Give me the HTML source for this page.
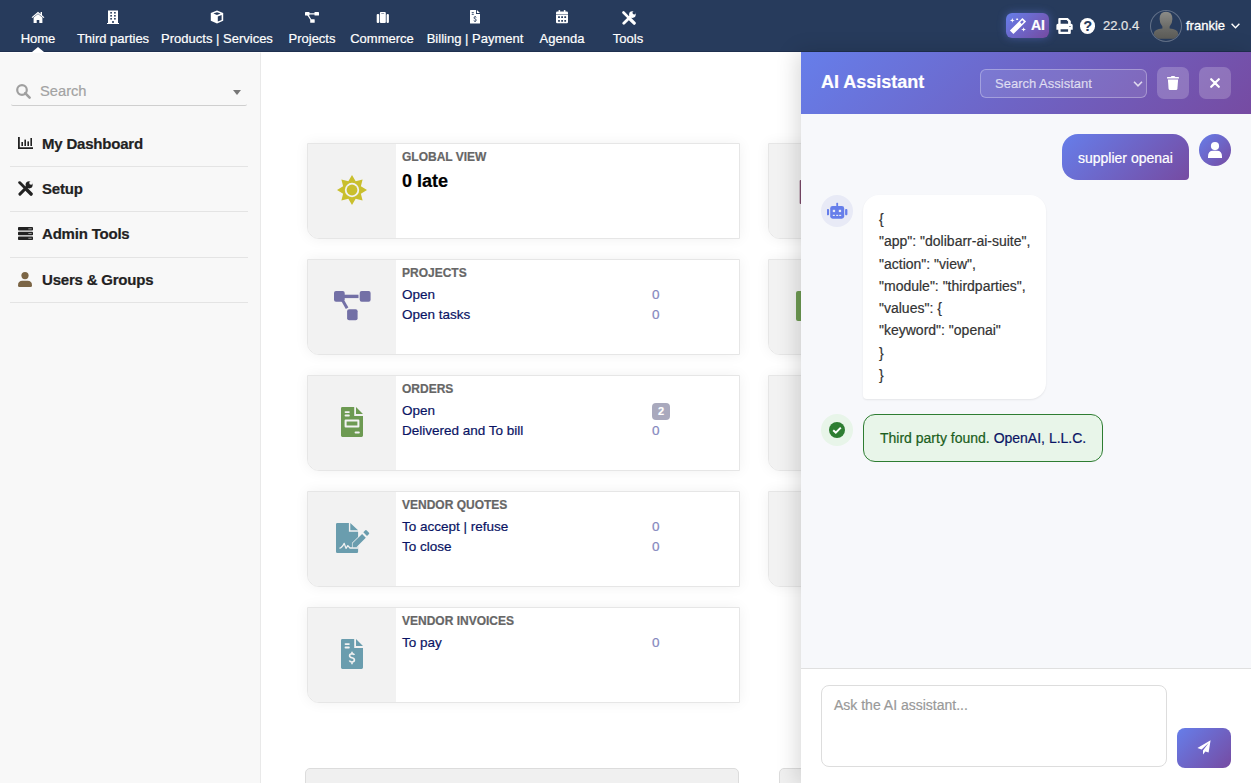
<!DOCTYPE html>
<html><head><meta charset="utf-8">
<style>
*{box-sizing:border-box;margin:0;padding:0}
html,body{width:1251px;height:783px;overflow:hidden;background:#fff;font-family:"Liberation Sans",sans-serif;position:relative}
.abs{position:absolute}
#top{position:absolute;left:0;top:0;width:1251px;height:52px;background:rgb(39,59,92);border-bottom:1px solid rgb(31,48,79)}
.mi{position:absolute;top:0;height:52px;color:#fff;font-size:13px;text-align:center}
.mi .lbl{position:absolute;top:31px;left:0;white-space:nowrap;line-height:15px}
.mi svg{position:absolute;top:10px}
#side{position:absolute;left:0;top:52px;width:261px;height:731px;background:#f8f8f8;border-right:1px solid #e9e9e9;border-top:1px solid #fff}
.sm{position:absolute;left:42px;font-size:15px;letter-spacing:-0.2px;font-weight:bold;color:#222;white-space:nowrap;line-height:17px}
.sep{position:absolute;left:10px;width:238px;height:1px;background:#e4e4e4}
.box{position:absolute;left:307px;width:433px;height:96px;background:#fff;border:1px solid #e6e6e6;border-radius:0 0 0 12px;box-shadow:0 0 14px rgba(0,0,0,0.06)}
.box .ic{position:absolute;left:0;top:0;width:88px;height:94px;background:#f2f2f2;border-radius:0 0 0 11px}
.box .ttl{position:absolute;left:94px;top:6px;font-size:12px;font-weight:bold;color:#666;line-height:14px;white-space:nowrap}
.box .row{position:absolute;left:94px;font-size:13.5px;color:rgb(10,20,100);line-height:16px;white-space:nowrap}
.box .num{position:absolute;left:344px;font-size:13.5px;color:#8587be;line-height:16px}
.boxr{left:768px}
#panel{position:absolute;left:801px;top:52px;width:450px;height:731px;background:#f7f8fb;box-shadow:-4px 0 20px rgba(0,0,0,0.15)}
#phead{position:absolute;left:0;top:0;width:450px;height:62px;background:linear-gradient(135deg,#667eea 0%,#764ba2 100%)}
body *{-webkit-text-stroke:0.2px currentColor}
</style></head><body>
<div id="top">
  <!-- Home -->
  <svg class="abs" style="left:31px;top:11px" width="14" height="12" viewBox="0 0 14 12"><path d="M7 0.8 L0.6 6.2 L1.4 7.1 L7 2.4 L12.6 7.1 L13.4 6.2 L11 4.2 V1 H9.6 V3 Z" fill="#fff"/><path d="M2.6 6.6 L7 3 L11.4 6.6 V12 H8.3 V9 H5.7 V12 H2.6Z" fill="#fff"/></svg>
  <div class="mi" style="left:-62px;width:200px"><span class="lbl" style="width:200px">Home</span></div>
  <!-- Third parties -->
  <svg class="abs" style="left:107px;top:10px" width="12" height="14" viewBox="0 0 12 14"><path d="M1 0.5 H11 V13 H12 V14 H0 V13 H1Z" fill="#fff"/><g fill="rgb(39,59,92)"><rect x="3.3" y="2" width="1.6" height="1.6"/><rect x="7.1" y="2" width="1.6" height="1.6"/><rect x="3.3" y="5" width="1.6" height="1.6"/><rect x="7.1" y="5" width="1.6" height="1.6"/><rect x="3.3" y="8" width="1.6" height="1.6"/><rect x="7.1" y="8" width="1.6" height="1.6"/><rect x="5.2" y="11" width="1.6" height="2"/></g></svg>
  <div class="mi" style="left:13px;width:200px"><span class="lbl" style="width:200px">Third parties</span></div>
  <!-- Products -->
  <svg class="abs" style="left:210px;top:10px" width="14" height="14" viewBox="0 0 14 14"><path d="M7 0.5 L13.2 3 V10.8 L7 13.5 L0.8 10.8 V3Z" fill="#fff"/><path d="M7 2.2 L10.6 3.6 L7 5 L3.4 3.6Z M7.8 6.4 L11.6 4.9 V10 L7.8 11.6Z" fill="rgb(39,59,92)"/></svg>
  <div class="mi" style="left:117px;width:200px"><span class="lbl" style="width:200px">Products | Services</span></div>
  <!-- Projects -->
  <svg class="abs" style="left:305px;top:12px" width="14" height="11" viewBox="0 0 14 11"><rect x="0" y="0" width="4.5" height="3.6" rx="0.6" fill="#fff"/><rect x="9.5" y="0" width="4.5" height="3.6" rx="0.6" fill="#fff"/><rect x="5.2" y="7.2" width="4.5" height="3.6" rx="0.6" fill="#fff"/><path d="M4 1.2 H10 V2.4 H4Z M2.2 3 L3.4 2.6 L6.4 7.4 L5.2 7.8Z" fill="#fff"/></svg>
  <div class="mi" style="left:212px;width:200px"><span class="lbl" style="width:200px">Projects</span></div>
  <!-- Commerce -->
  <svg class="abs" style="left:376px;top:11px" width="13" height="12" viewBox="0 0 13 12"><rect x="0.7" y="3.1" width="2.5" height="8.8" rx="1" fill="#fff"/><rect x="3.9" y="0.9" width="5.9" height="11" rx="1" fill="#fff"/><rect x="5.2" y="2.2" width="3" height="0.8" rx="0.3" fill="rgb(120,130,150)"/><rect x="10.6" y="3.1" width="2.3" height="8.8" rx="1" fill="#fff"/></svg>
  <div class="mi" style="left:282px;width:200px"><span class="lbl" style="width:200px">Commerce</span></div>
  <!-- Billing -->
  <svg class="abs" style="left:470px;top:10.2px" width="10" height="14" viewBox="0 0 10 14"><path d="M0 0.6 Q0 0 0.6 0 H6 V3.9 H10 V12.9 Q10 13.5 9.4 13.5 H0.6 Q0 13.5 0 12.9Z M6.9 0 L10 3.1 H6.9Z" fill="#fff"/><g fill="rgb(39,59,92)"><rect x="1.6" y="1.9" width="2.3" height="0.9" rx="0.4"/><rect x="1.6" y="3.8" width="2.3" height="0.9" rx="0.4"/></g><path d="M6.3 7.4 Q5.9 6.9 5.1 6.9 Q4 7 4 7.9 Q4 8.6 5.1 8.9 Q6.3 9.2 6.3 10.1 Q6.3 11 5.1 11.1 Q4.1 11.1 3.7 10.5 M5.1 6 V6.9 M5.1 11.1 V12" stroke="rgb(39,59,92)" stroke-width="0.9" fill="none"/></svg>
  <div class="mi" style="left:375px;width:200px"><span class="lbl" style="width:200px">Billing | Payment</span></div>
  <!-- Agenda -->
  <svg class="abs" style="left:556px;top:10.3px" width="12" height="14" viewBox="0 0 12 14"><rect x="2.6" y="0" width="1.5" height="2.8" rx="0.6" fill="#fff"/><rect x="7.9" y="0" width="1.5" height="2.8" rx="0.6" fill="#fff"/><path d="M0 3 Q0 1.6 1.3 1.6 H10.7 Q12 1.6 12 3 V4.4 H0Z" fill="#fff"/><path d="M0 5 H12 V12.1 Q12 13.3 10.8 13.3 H1.2 Q0 13.3 0 12.1Z" fill="#fff"/><g fill="rgb(39,59,92)"><rect x="2.1" y="6.3" width="1.8" height="1.8" rx="0.3"/><rect x="5.2" y="6.3" width="1.8" height="1.8" rx="0.3"/><rect x="8.3" y="6.3" width="1.8" height="1.8" rx="0.3"/><rect x="2.1" y="9.9" width="1.8" height="1.8" rx="0.3"/><rect x="5.2" y="9.9" width="1.8" height="1.8" rx="0.3"/><rect x="8.3" y="9.9" width="1.8" height="1.8" rx="0.3"/></g></svg>
  <div class="mi" style="left:462px;width:200px"><span class="lbl" style="width:200px">Agenda</span></div>
  <!-- Tools -->
  <svg class="abs" style="left:621.9px;top:10.7px" width="14" height="14" viewBox="0 0 14 14"><path d="M1.5 1.5 L6.6 6.6" stroke="#fff" stroke-width="2.6" stroke-linecap="round"/><path d="M8 8 L12.2 12.2" stroke="#fff" stroke-width="3.2" stroke-linecap="round"/><path d="M1.8 12.2 L8.6 5.4" stroke="#fff" stroke-width="2.8" stroke-linecap="round"/><circle cx="10.4" cy="3.6" r="3.3" fill="#fff"/><circle cx="12.2" cy="1.8" r="1.7" fill="rgb(39,59,92)"/></svg>
  <div class="mi" style="left:528px;width:200px"><span class="lbl" style="width:200px">Tools</span></div>
  <!-- active triangle -->
  <div class="abs" style="left:32px;top:46.5px;width:0;height:0;border-left:6px solid transparent;border-right:6px solid transparent;border-bottom:5.5px solid #fff"></div>

  <!-- AI button -->
  <div class="abs" style="left:1006px;top:13px;width:43px;height:25px;border-radius:6px;background:linear-gradient(135deg,#667eea 0%,#764ba2 100%);box-shadow:0 0 8px rgba(102,126,234,0.45)"></div>
  <svg class="abs" style="left:1004px;top:11px" width="48" height="29" viewBox="0 0 48 29"><path d="M18.4 7.1 L22.1 10.6 L9.4 23 L5.9 19.4Z M18.26 9.26 L19.8 10.84 L17.66 12.94 L16.12 11.36Z" fill="#fff" fill-rule="evenodd"/><path d="M8.3 7 Q8.3 9.4 10.7 9.4 Q8.3 9.4 8.3 11.8 Q8.3 9.4 5.9 9.4 Q8.3 9.4 8.3 7Z" fill="#fff"/><rect x="12.1" y="7.6" width="2.1" height="1.3" rx="0.6" fill="#fff"/><path d="M19.6 15.8 Q19.6 18.4 22.2 18.4 Q19.6 18.4 19.6 21 Q19.6 18.4 17 18.4 Q19.6 18.4 19.6 15.8Z" fill="#fff"/></svg>
  <div class="abs" style="left:1031px;top:17px;font-size:14px;font-weight:bold;color:#fff;line-height:16px">AI</div>
  <!-- printer -->
  <svg class="abs" style="left:1052px;top:14px" width="24" height="24" viewBox="0 0 24 24"><path d="M6.3 5 Q6.3 4 7.3 4 H15.8 L18.8 7 V9.8 H19.2 Q20.7 9.8 20.7 11.3 V15.7 H18.8 V19 Q18.8 20 17.8 20 H7.3 Q6.3 20 6.3 19 V15.7 H4.4 V11.3 Q4.4 9.8 5.9 9.8 H6.3Z M8.6 6.1 H14.6 L16.1 7.6 V9.8 H8.6Z M8.6 15.3 H16.1 V17.7 H8.6Z" fill="#fff" fill-rule="evenodd"/><rect x="17.3" y="12" width="1.4" height="0.9" rx="0.4" fill="rgb(39,59,92)"/></svg>
  <!-- help -->
  <div class="abs" style="left:1080px;top:18.3px;width:15.4px;height:15.4px;border-radius:50%;background:#fff"></div>
  <div class="abs" style="left:1080px;top:18px;width:15.4px;text-align:center;font-size:14px;font-weight:bold;color:rgb(39,59,92);line-height:16px">?</div>
  <div class="abs" style="left:1103px;top:18px;font-size:13px;color:#e6e6e6;line-height:15px">22.0.4</div>
  <!-- avatar -->
  <div class="abs" style="left:1150px;top:10px;width:32px;height:32px;border-radius:50%;border:1px solid rgba(255,255,255,0.28);overflow:hidden;background:rgb(39,59,92)">
    <svg style="position:absolute;left:0;top:0" width="30" height="30" viewBox="0 0 30 30"><defs><linearGradient id="av" x1="0" y1="0" x2="0" y2="1"><stop offset="0" stop-color="#8c8c88"/><stop offset="0.6" stop-color="#6a6a66"/><stop offset="1" stop-color="#5c5c58"/></linearGradient></defs><path d="M15 0.7 Q21.4 0.7 21.4 8 Q21.4 12.5 18.6 15.5 V17.6 Q26.5 18.4 27 22 V26.5 Q27 27.8 25.5 27.8 H4.4 Q2.9 27.8 2.9 26.5 V22 Q3.4 18.4 11.4 17.6 V15.5 Q8.6 12.5 8.6 8 Q8.6 0.7 15 0.7Z" fill="url(#av)"/></svg>
  </div>
  <div class="abs" style="left:1186px;top:18px;font-size:13px;color:#fff;line-height:15px;-webkit-text-stroke:0.3px #fff">frankie</div>
  <svg class="abs" style="left:1231px;top:23px" width="9" height="6" viewBox="0 0 9 6"><path d="M0.6 0.8 L4.5 4.8 L8.4 0.8" stroke="#fff" stroke-width="1.4" fill="none"/></svg>
</div>
<div id="side">
  <svg class="abs" style="left:16px;top:31px" width="15" height="15" viewBox="0 0 15 15"><circle cx="6" cy="6" r="4.8" stroke="#a0a0a0" stroke-width="2.2" fill="none"/><path d="M9.2 9.2 L13.6 13.6" stroke="#a0a0a0" stroke-width="2.6" stroke-linecap="round"/></svg>
  <div class="abs" style="left:40px;top:30.2px;font-size:14.7px;color:#a3a3a3;line-height:17px">Search</div>
  <svg class="abs" style="left:233px;top:36.8px" width="8" height="5" viewBox="0 0 8 5"><path d="M0 0 H8 L4 5Z" fill="#777"/></svg>
  <div class="abs" style="left:11px;top:51px;width:236px;height:2px;border-bottom:1px solid #cfcfcf;border-radius:0 0 2px 2px"></div>

  <svg class="abs" style="left:18px;top:84px" width="15" height="12" viewBox="0 0 15 12"><path d="M0 0 H1.8 V10.2 H15 V12 H0Z" fill="#222"/><rect x="3.4" y="5" width="1.6" height="4" fill="#222"/><rect x="6.4" y="2.6" width="1.6" height="6.4" fill="#222"/><rect x="9.4" y="4.4" width="1.6" height="4.6" fill="#222"/><rect x="12.4" y="1" width="1.6" height="8" fill="#222"/></svg>
  <div class="sm" style="top:81.5px">My Dashboard</div>
  <div class="sep" style="top:113px"></div>

  <svg class="abs" style="left:18px;top:128px" width="15" height="15" viewBox="0 0 14 14"><path d="M1.5 1.5 L6.6 6.6" stroke="#222" stroke-width="2.6" stroke-linecap="round"/><path d="M8 8 L12.2 12.2" stroke="#222" stroke-width="3.2" stroke-linecap="round"/><path d="M1.8 12.2 L8.6 5.4" stroke="#222" stroke-width="2.8" stroke-linecap="round"/><circle cx="10.4" cy="3.6" r="3.3" fill="#222"/><circle cx="12.2" cy="1.8" r="1.7" fill="#f8f8f8"/></svg>
  <div class="sm" style="top:126.5px">Setup</div>
  <div class="sep" style="top:158px"></div>

  <svg class="abs" style="left:18px;top:174px" width="15" height="13" viewBox="0 0 15 13"><rect x="0" y="0" width="15" height="3.6" rx="0.8" fill="#222"/><rect x="0" y="4.7" width="15" height="3.6" rx="0.8" fill="#222"/><rect x="0" y="9.4" width="15" height="3.6" rx="0.8" fill="#222"/><g fill="#f8f8f8"><rect x="10.6" y="1.4" width="1" height="0.9"/><rect x="12.4" y="1.4" width="1" height="0.9"/><rect x="10.6" y="6.1" width="1" height="0.9"/><rect x="12.4" y="6.1" width="1" height="0.9"/><rect x="10.6" y="10.8" width="1" height="0.9"/><rect x="12.4" y="10.8" width="1" height="0.9"/></g></svg>
  <div class="sm" style="top:172px">Admin Tools</div>
  <div class="sep" style="top:204px"></div>

  <svg class="abs" style="left:18px;top:219px" width="14" height="15" viewBox="0 0 14 15"><circle cx="7" cy="3.6" r="3.6" fill="#7b6545"/><path d="M0 13.4 Q0 8.8 4.4 8.8 H9.6 Q14 8.8 14 13.4 Q14 15 12.6 15 H1.4 Q0 15 0 13.4Z" fill="#7b6545"/></svg>
  <div class="sm" style="top:217.5px">Users &amp; Groups</div>
  <div class="sep" style="top:249px"></div>
</div>
<div id="main">
  <!-- GLOBAL VIEW -->
  <div class="box" style="top:143px">
    <div class="ic"><svg class="abs" style="left:29px;top:31px" width="30" height="30" viewBox="0 0 30 30"><path d="M15.00 0.00 L18.67 6.13 L25.61 4.39 L23.87 11.33 L30.00 15.00 L23.87 18.67 L25.61 25.61 L18.67 23.87 L15.00 30.00 L11.33 23.87 L4.39 25.61 L6.13 18.67 L0.00 15.00 L6.13 11.33 L4.39 4.39 L11.33 6.13Z" fill="#c9bf2d"/><circle cx="15" cy="15" r="7.2" fill="#f2f2f2"/><circle cx="15" cy="15" r="5.4" fill="#c9bf2d"/></svg></div>
    <div class="ttl">GLOBAL VIEW</div>
    <div class="abs" style="left:94px;top:27px;font-size:18px;font-weight:bold;color:#000;line-height:20px;white-space:nowrap">0 late</div>
  </div>
  <!-- PROJECTS -->
  <div class="box" style="top:259px">
    <div class="ic"><svg class="abs" style="left:25.5px;top:31.3px" width="37" height="30" viewBox="0 0 37 30"><g fill="#7370a6"><rect x="0" y="0" width="10.7" height="10.7" rx="2"/><rect x="25.7" y="0" width="10.9" height="10.7" rx="2"/><rect x="13.1" y="18.3" width="10.5" height="11" rx="2"/><rect x="10" y="3.7" width="14.5" height="3.4"/><path d="M7.3 10 L10.7 10 L14.4 16.6 L11.8 17.9Z"/></g></svg></div>
    <div class="ttl">PROJECTS</div>
    <div class="row" style="top:26.5px">Open</div><div class="num" style="top:26.5px">0</div>
    <div class="row" style="top:46.5px">Open tasks</div><div class="num" style="top:46.5px">0</div>
  </div>
  <!-- ORDERS -->
  <div class="box" style="top:375px">
    <div class="ic"><svg class="abs" style="left:33px;top:31px" width="22" height="30" viewBox="0 0 22 30"><path d="M1.2 0 H13.2 V9 H22 V28.6 Q22 30 20.6 30 H1.4 Q0 30 0 28.6 V1.4 Q0 0 1.2 0Z M15 0 L22 7 H15Z" fill="#6d9a52"/><g fill="#f2f2f2"><rect x="3.6" y="4.2" width="5.2" height="1.8" rx="0.9"/><rect x="3.6" y="7.6" width="5.2" height="1.8" rx="0.9"/><rect x="13.6" y="24.6" width="5.2" height="1.8" rx="0.9"/><path d="M3.6 13.6 Q3.6 12.6 4.6 12.6 H17.4 Q18.4 12.6 18.4 13.6 V19.4 Q18.4 20.4 17.4 20.4 H4.6 Q3.6 20.4 3.6 19.4Z M5.6 14.6 V18.4 H16.4 V14.6Z" fill-rule="evenodd"/></g></svg></div>
    <div class="ttl">ORDERS</div>
    <div class="row" style="top:26.5px">Open</div><div class="abs" style="left:344px;top:27px;width:18px;height:17px;border-radius:4px;background:#a9a9bd;color:#fff;font-size:11px;font-weight:bold;text-align:center;line-height:17px">2</div>
    <div class="row" style="top:46.5px">Delivered and To bill</div><div class="num" style="top:46.5px">0</div>
  </div>
  <!-- VENDOR QUOTES -->
  <div class="box" style="top:491px">
    <div class="ic"><svg class="abs" style="left:27.5px;top:31px" width="34" height="30" viewBox="0 0 34 30"><path d="M1.3 0 H12.9 V8.7 H22.1 V28.7 Q22.1 30 20.8 30 H1.3 Q0 30 0 28.7 V1.3 Q0 0 1.3 0Z M14.3 0 L22.1 7.2 H14.3Z" fill="#6a9dae"/><path d="M3.4 25.2 Q5.6 25.4 8.2 20.4 L10 25.4 L11.8 22.6 L14 25 H22.1" stroke="#f2f2f2" stroke-width="1.3" fill="none" stroke-linejoin="round"/><path d="M16.6 20.2 L26.1 11 L29.8 14.7 L20.8 23.8 V24.2 H16.6Z" fill="#6a9dae" stroke="#f2f2f2" stroke-width="1.3" paint-order="stroke"/><path d="M27.3 9.3 L29.3 7.3 Q29.9 6.8 30.5 7.3 L33 9.8 Q33.5 10.4 33 11 L31 13Z" fill="#6a9dae"/></svg></div>
    <div class="ttl">VENDOR QUOTES</div>
    <div class="row" style="top:26.5px">To accept | refuse</div><div class="num" style="top:26.5px">0</div>
    <div class="row" style="top:46.5px">To close</div><div class="num" style="top:46.5px">0</div>
  </div>
  <!-- VENDOR INVOICES -->
  <div class="box" style="top:607px">
    <div class="ic"><svg class="abs" style="left:33px;top:31px" width="22" height="30" viewBox="0 0 22 30"><path d="M1.2 0 H13.2 V9 H22 V28.6 Q22 30 20.6 30 H1.4 Q0 30 0 28.6 V1.4 Q0 0 1.2 0Z M15 0 L22 7 H15Z" fill="#6a9dae"/><g fill="#f2f2f2"><rect x="3.6" y="4.2" width="5.2" height="1.8" rx="0.9"/><rect x="3.6" y="7.6" width="5.2" height="1.8" rx="0.9"/></g><path d="M13.4 15.9 Q12.7 14.8 11 14.8 Q8.6 14.9 8.6 16.8 Q8.6 18.4 11 18.8 Q13.4 19.3 13.4 21 Q13.4 22.9 11 23 Q8.9 23 8.4 21.6 M11 12.8 V14.8 M11 23 V25.2" stroke="#f2f2f2" stroke-width="1.6" fill="none"/></svg></div>
    <div class="ttl">VENDOR INVOICES</div>
    <div class="row" style="top:26.5px">To pay</div><div class="num" style="top:26.5px">0</div>
  </div>

  <!-- right column (partially hidden) -->
  <div class="box boxr" style="top:143px"><div class="ic"><svg class="abs" style="left:29px;top:36px" width="6" height="24" viewBox="0 0 6 24"><rect x="1.7" y="0" width="3" height="24" rx="1" fill="#7d4a6a"/></svg></div></div>
  <div class="box boxr" style="top:259px"><div class="ic"><div class="abs" style="left:27px;top:31px;width:10px;height:30px;border-radius:2px;background:#6d9a52"></div></div></div>
  <div class="box boxr" style="top:375px"><div class="ic"></div></div>
  <div class="box boxr" style="top:491px"><div class="ic"></div></div>

  <!-- bottom boxes -->
  <div class="abs" style="left:305px;top:768px;width:434px;height:30px;background:#f0f0f0;border:1px solid #dcdcdc;border-radius:5px 5px 0 0"></div>
  <div class="abs" style="left:779px;top:768px;width:434px;height:30px;background:#f0f0f0;border:1px solid #dcdcdc;border-radius:5px 5px 0 0"></div>
</div>
<div id="panel">
  <div id="phead">
    <div class="abs" style="left:20px;top:20px;font-size:18px;font-weight:bold;color:#fff;line-height:21px;white-space:nowrap">AI Assistant</div>
    <div class="abs" style="left:179px;top:17px;width:167px;height:29px;border:1px solid rgba(255,255,255,0.3);background:rgba(255,255,255,0.1);border-radius:6px"></div>
    <div class="abs" style="left:194px;top:24px;font-size:13px;color:rgba(255,255,255,0.7);line-height:15px;white-space:nowrap">Search Assistant</div>
    <svg class="abs" style="left:332px;top:29px" width="10" height="6" viewBox="0 0 10 6"><path d="M1 0.8 L5 4.8 L9 0.8" stroke="rgba(255,255,255,0.75)" stroke-width="1.6" fill="none"/></svg>
    <div class="abs" style="left:356px;top:15px;width:32px;height:32px;border-radius:7px;background:rgba(255,255,255,0.2)"></div>
    <svg class="abs" style="left:366px;top:24px" width="12" height="14" viewBox="0 0 12 14"><path d="M4 0.6 Q4.2 0 4.8 0 H7.2 Q7.8 0 8 0.6 L8.3 1.1 H11.4 Q12 1.1 12 1.7 V2.4 H0 V1.7 Q0 1.1 0.6 1.1 H3.7Z" fill="#fff"/><path d="M0.9 3.4 H11.1 L10.4 12.8 Q10.3 14 9.1 14 H2.9 Q1.7 14 1.6 12.8Z" fill="#fff"/></svg>
    <div class="abs" style="left:398px;top:15px;width:32px;height:32px;border-radius:7px;background:rgba(255,255,255,0.2)"></div>
    <svg class="abs" style="left:409px;top:26px" width="10" height="10" viewBox="0 0 10 10"><path d="M1.2 1.2 L8.8 8.8 M8.8 1.2 L1.2 8.8" stroke="#fff" stroke-width="2.2" stroke-linecap="round"/></svg>
  </div>
  <!-- messages -->
  <div class="abs" style="left:0;top:62px;width:450px;height:554px;background:#f7f8fb"></div>
  <!-- user msg -->
  <div class="abs" style="left:261px;top:82px;width:127px;height:46px;border-radius:16px 16px 4px 16px;background:linear-gradient(135deg,#667eea 0%,#764ba2 100%)"></div>
  <div class="abs" style="left:277px;top:97.5px;font-size:14px;color:#fff;line-height:16px;white-space:nowrap">supplier openai</div>
  <div class="abs" style="left:398px;top:82px;width:32px;height:32px;border-radius:50%;background:linear-gradient(135deg,#667eea 0%,#764ba2 100%)"></div>
  <svg class="abs" style="left:407px;top:90px" width="14" height="16" viewBox="0 0 14 16"><circle cx="7" cy="4.1" r="4.1" fill="#fff"/><path d="M0 14.6 Q0 8.8 5 8.8 H9 Q14 8.8 14 14.6 V16 H0Z" fill="#fff"/></svg>
  <!-- bot msg -->
  <div class="abs" style="left:20px;top:143px;width:32px;height:32px;border-radius:50%;background:#e8eaf6"></div>
  <svg class="abs" style="left:26px;top:150px" width="21" height="18" viewBox="0 0 21 18"><rect x="3.2" y="4.1" width="14" height="12.6" rx="2.4" fill="#667eea"/><rect x="9.3" y="0.8" width="1.8" height="4" rx="0.6" fill="#667eea"/><rect x="-0.2" y="7" width="2.3" height="6.2" rx="0.9" fill="#667eea"/><rect x="18.1" y="7" width="2.3" height="6.2" rx="0.9" fill="#667eea"/><rect x="5.8" y="7.8" width="2.3" height="2.3" fill="#e8eaf6"/><rect x="11.8" y="7.8" width="2.3" height="2.3" fill="#e8eaf6"/><rect x="5.8" y="12.8" width="2" height="1.2" fill="#e8eaf6"/><rect x="9.2" y="12.8" width="2" height="1.2" fill="#e8eaf6"/><rect x="12.2" y="12.8" width="2" height="1.2" fill="#e8eaf6"/></svg>
  <div class="abs" style="left:62px;top:143px;width:183px;height:204px;border-radius:16px 16px 16px 4px;background:#fff;box-shadow:0 1px 2px rgba(0,0,0,0.08)"></div>
  <div class="abs" style="left:78px;top:156px;font-size:14px;color:#333;line-height:22.26px;white-space:nowrap">{<br>"app": "dolibarr-ai-suite",<br>"action": "view",<br>"module": "thirdparties",<br>"values": {<br>"keyword": "openai"<br>}<br>}</div>
  <!-- success -->
  <div class="abs" style="left:20px;top:362px;width:32px;height:32px;border-radius:50%;background:#e8f5e9"></div>
  <svg class="abs" style="left:28px;top:370px" width="16" height="16" viewBox="0 0 16 16"><circle cx="8" cy="8" r="8" fill="#2e7d32"/><path d="M4.2 8.2 L6.8 10.6 L11.8 5.6" stroke="#fff" stroke-width="2" fill="none"/></svg>
  <div class="abs" style="left:62px;top:362px;width:240px;height:48px;border-radius:12px;background:#e8f5e9;border:1px solid #2e7d32"></div>
  <div class="abs" style="left:79px;top:378px;font-size:14px;color:#1b5e20;line-height:16px;white-space:nowrap">Third party found. <span style="color:rgb(10,20,100)">OpenAI, L.L.C.</span></div>
  <!-- input area -->
  <div class="abs" style="left:0;top:616px;width:450px;height:115px;background:#fff;border-top:1px solid #e0e0e0"></div>
  <div class="abs" style="left:20px;top:633px;width:346px;height:82px;border:1px solid #ddd;border-radius:8px;background:#fff"></div>
  <div class="abs" style="left:33px;top:645px;font-size:14px;color:#999;line-height:16px;white-space:nowrap">Ask the AI assistant...</div>
  <div class="abs" style="left:376px;top:676px;width:54px;height:40px;border-radius:8px;background:linear-gradient(135deg,#667eea 0%,#764ba2 100%)"></div>
  <svg class="abs" style="left:396px;top:688px" width="14" height="15" viewBox="0 0 14 15"><path d="M13.6 0.2 L0.4 8 L4.6 9.6 L11.6 3 L6 10.4 V14.6 L8.4 11.4 L11.6 12.6Z" fill="#fff"/></svg>
</div>
</body></html>
